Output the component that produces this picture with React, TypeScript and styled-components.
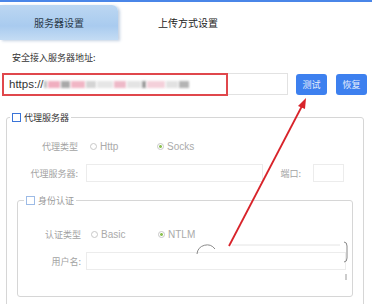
import React from "react";
import styled, { createGlobalStyle } from "styled-components";

const GlobalStyle = createGlobalStyle`
  body {
    margin: 0;
    background: #fff;
    font-family: "Noto Sans CJK SC", "Liberation Sans", sans-serif;
    color: #333;
  }
`;

const Page = styled.div`
  position: relative;
  width: 372px;
  height: 304px;
  overflow: hidden;
  border-top: 2px solid #4a86e8;
  box-sizing: border-box;
`;

const TabBar = styled.div`
  display: flex;
  padding-top: 3px;
  height: 38px;
  box-sizing: border-box;
`;

const Tab = styled.div<{ $active?: boolean }>`
  width: ${(p) => (p.$active ? "118px" : "140px")};
  height: 35px;
  display: flex;
  align-items: center;
  justify-content: center;
  font-size: 10px;
  color: ${(p) => (p.$active ? "#2b3a4a" : "#222")};
  background: ${(p) =>
    p.$active ? "linear-gradient(#bcd7f2, #a9cbef 60%, #c4dcf4)" : "transparent"};
  border-top-right-radius: 6px;
  box-shadow: ${(p) => (p.$active ? "2px 1px 3px rgba(120,150,190,0.45)" : "none")};
`;

const Body = styled.div`
  padding: 12px 0 0 12px;
`;

const Caption = styled.div`
  font-size: 9px;
  color: #333;
  line-height: 12px;
`;

const UrlRow = styled.div`
  display: flex;
  align-items: center;
  margin: 9px 0 0 -10px;
`;

const UrlBox = styled.div`
  position: relative;
  width: 286px;
  height: 22px;
  border: 1px solid #e2e2e2;
  box-sizing: border-box;
  display: flex;
  align-items: center;
  padding-left: 6px;
  font-family: "Liberation Sans", sans-serif;
  font-size: 11.5px;
  color: #333;
`;

const Highlight = styled.div`
  position: absolute;
  left: -1px;
  top: -1px;
  width: 226px;
  height: 23px;
  border: 2px solid #e0474c;
  box-sizing: border-box;
`;

const Smudge = styled.span<{ $w: number; $c: string }>`
  display: inline-block;
  width: ${(p) => p.$w}px;
  height: 7px;
  background: ${(p) => p.$c};
  filter: blur(1.2px);
  margin-right: 1px;
`;

const BlueButton = styled.button`
  width: 31px;
  height: 21px;
  margin-left: 8px;
  border: none;
  border-radius: 3px;
  background: #3d80ef;
  color: #e6eefc;
  font-family: "Noto Sans CJK SC", sans-serif;
  font-size: 9px;
  padding: 0;
  & + & {
    margin-left: 9px;
  }
`;

const Group = styled.fieldset<{ $inner?: boolean }>`
  margin: ${(p) => (p.$inner ? "12px 10px 0 0" : "16px 8px 0 -6px")};
  padding: ${(p) => (p.$inner ? "9px 0 26px 0" : "4px 0 0 0")};
  border: 1px solid #d6d6d6;
  border-radius: 3px;
  height: ${(p) => (p.$inner ? "auto" : "260px")};
  box-sizing: border-box;
`;

const Legend = styled.legend<{ $dim?: boolean }>`
  display: flex;
  align-items: center;
  gap: 3px;
  padding: 0 2px;
  margin-left: ${(p) => (p.$dim ? "6px" : "3px")};
  font-size: 9px;
  color: ${(p) => (p.$dim ? "#999" : "#333")};
`;

const Check = styled.span<{ $dim?: boolean }>`
  width: 7px;
  height: 7px;
  border: 1px solid ${(p) => (p.$dim ? "#9dbbe6" : "#3a74d8")};
  background: #fff;
`;

const Row = styled.div`
  display: flex;
  align-items: center;
  height: 18px;
  margin-top: 9px;
  font-size: 9px;
  color: #a3a3a3;
`;

const Label = styled.div<{ $w: number }>`
  width: ${(p) => p.$w}px;
  text-align: right;
  flex: none;
`;

const Radio = styled.div<{ $on?: boolean; $w?: number }>`
  display: flex;
  align-items: center;
  gap: 3px;
  width: ${(p) => p.$w ?? 67}px;
  font-family: "Liberation Sans", sans-serif;
  font-size: 10px;
  color: #aaa;
  &::before {
    content: "";
    width: 5px;
    height: 5px;
    border-radius: 50%;
    border: 1px solid #c8c8c8;
    background: ${(p) => (p.$on ? "radial-gradient(#8cc152 35%, #fff 45%)" : "#fff")};
  }
`;

const Field = styled.div<{ $w: number }>`
  width: ${(p) => p.$w}px;
  height: 18px;
  border: 1px solid #ececec;
  box-sizing: border-box;
  background: #fff;
  flex: none;
`;

const Overlay = styled.svg`
  position: absolute;
  left: 0;
  top: 0;
  pointer-events: none;
`;

const smudges: [number, string][] = [
  [3, "#bdbdbd"],
  [12, "#f0aebf"],
  [9, "#a9a9a9"],
  [14, "#f1b6c5"],
  [10, "#d4d4d4"],
  [16, "#e6e6e6"],
  [12, "#eeb9c8"],
  [14, "#e4e4e4"],
  [4, "#9a9a9a"],
  [18, "#f4d0da"],
  [12, "#e2e2e2"],
  [10, "#b4b4b4"],
];

export default function App() {
  return (
    <Page>
      <GlobalStyle />
      <TabBar>
        <Tab $active>服务器设置</Tab>
        <Tab>上传方式设置</Tab>
      </TabBar>
      <Body>
        <Caption>安全接入服务器地址:</Caption>
        <UrlRow>
          <UrlBox>
            https://
            {smudges.map(([w, c], i) => (
              <Smudge key={i} $w={w} $c={c} />
            ))}
            <Highlight />
          </UrlBox>
          <BlueButton>测试</BlueButton>
          <BlueButton>恢复</BlueButton>
        </UrlRow>
        <Group>
          <Legend>
            <Check />
            代理服务器
          </Legend>
          <Row>
            <Label $w={71}>代理类型</Label>
            <Radio style={{ marginLeft: 12 }}>Http</Radio>
            <Radio $on>Socks</Radio>
          </Row>
          <Row>
            <Label $w={71}>代理服务器:</Label>
            <Field $w={177} style={{ marginLeft: 8 }} />
            <Label $w={38}>端口:</Label>
            <Field $w={31} style={{ marginLeft: 12 }} />
          </Row>
          <Group $inner style={{ marginLeft: 10 }}>
            <Legend $dim>
              <Check $dim />
              身份认证
            </Legend>
            <Row>
              <Label $w={63}>认证类型</Label>
              <Radio style={{ marginLeft: 10 }}>Basic</Radio>
              <Radio $on>NTLM</Radio>
            </Row>
            <Row>
              <Label $w={63}>用户名:</Label>
              <Field $w={260} style={{ marginLeft: 5 }} />
            </Row>
          </Group>
        </Group>
      </Body>
      <Overlay width="372" height="304" viewBox="0 0 372 304">
        <path d="M197 252 A10 10 0 0 1 215 247" fill="none" stroke="#8a8a8a" strokeWidth="1" />
        <line x1="232" y1="243" x2="340" y2="243" stroke="#e4e4e4" strokeWidth="1" />
        <path d="M344 240 q3 0 3 4 v12 q0 4 -3 4" fill="none" stroke="#888" strokeWidth="1" />
        <line x1="346" y1="272" x2="346" y2="278" stroke="#999" strokeWidth="1" />
        <line x1="229" y1="244" x2="302" y2="104" stroke="#d8232a" strokeWidth="1.8" />
        <polygon points="306,96 298,104 305,107" fill="#d8232a" />
      </Overlay>
    </Page>
  );
}
